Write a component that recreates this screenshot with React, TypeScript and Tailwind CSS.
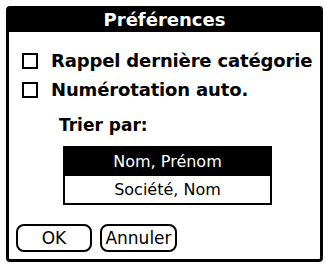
import React from 'react';

const Checkbox: React.FC<{ label: string }> = ({ label }) => (
  <div className="flex items-center h-[29px]">
    <div className="w-[16px] h-[16px] border-2 border-black bg-white shrink-0" />
    <span className="ml-[13px] text-[18px] font-bold leading-none text-black tracking-[-0.15px]">{label}</span>
  </div>
);

const PalmButton: React.FC<{ label: string; width: string }> = ({ label, width }) => (
  <button
    className={`${width} h-[28px] border-2 border-black rounded-[8px] bg-white flex items-center justify-center text-[17px] leading-none text-black`}
  >
    {label}
  </button>
);

export default function App() {
  return (
    <div
      className="w-[326px] h-[265px] bg-white pt-[6px] pl-[6px]"
      style={{ fontFamily: '"DejaVu Sans", "Liberation Sans", sans-serif' }}
    >
      <div className="w-[317px] h-[256px] border-[3px] border-black rounded-[4px] flex flex-col">
        <div className="h-[23px] bg-black flex items-center justify-center">
          <span className="text-white font-bold text-[18px] leading-none -mt-[1px]">Préférences</span>
        </div>

        <div className="pl-[13px] pt-[14px] flex flex-col">
          <Checkbox label="Rappel dernière catégorie" />
          <Checkbox label="Numérotation auto." />

          <div className="ml-[37px] mt-[13px] text-[17px] font-bold leading-none text-black">Trier par:</div>

          <div className="ml-[41px] mt-[12px] w-[209px] border-2 border-black flex flex-col">
            <div className="h-[28px] bg-black text-white flex items-center justify-center text-[16px] leading-none">
              Nom, Prénom
            </div>
            <div className="h-[27px] bg-white text-black flex items-center justify-center text-[16px] leading-none">
              Société, Nom
            </div>
          </div>
        </div>

        <div className="mt-auto mb-[7px] pl-[7px] flex gap-[8px]">
          <PalmButton label="OK" width="w-[76px]" />
          <PalmButton label="Annuler" width="w-[77px]" />
        </div>
      </div>
    </div>
  );
}
